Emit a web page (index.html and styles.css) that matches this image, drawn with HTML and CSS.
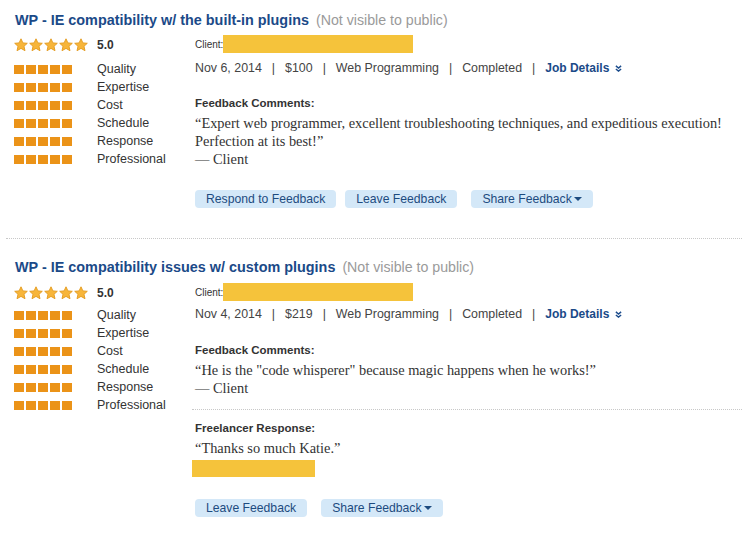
FILE: index.html
```html
<!DOCTYPE html>
<html>
<head>
<meta charset="utf-8">
<link rel="stylesheet" href="styles.css">
</head>
<body>
<svg width="0" height="0" class="defs">
  <defs>
    <symbol id="star" viewBox="0 0 14 14">
      <path d="M7 0.8 L8.9 4.9 L13.3 5.3 L10 8.3 L11 12.7 L7 10.4 L3 12.7 L4 8.3 L0.7 5.3 L5.1 4.9 Z" fill="#f7b53a" stroke="#e39a1d" stroke-width="0.9" stroke-linejoin="round"/>
    </symbol>
    <symbol id="chev" viewBox="0 0 8 8">
      <path d="M1 1 L4 3.5 L7 1 M1 4.5 L4 7 L7 4.5" fill="none" stroke="#1c4c8c" stroke-width="1.6"/>
    </symbol>
  </defs>
</svg>

<div class="review">
  <div class="title"><span class="job">WP - IE compatibility w/ the built-in plugins</span> <span class="private">(Not visible to public)</span></div>
  <div class="body">
    <div class="ratings">
      <div class="overall">
        <span class="stars"><svg><use href="#star"/></svg><svg><use href="#star"/></svg><svg><use href="#star"/></svg><svg><use href="#star"/></svg><svg><use href="#star"/></svg></span>
        <span class="score">5.0</span>
      </div>
      <div class="crit"><span class="bar"><i></i><i></i><i></i><i></i><i></i></span><span>Quality</span></div>
      <div class="crit"><span class="bar"><i></i><i></i><i></i><i></i><i></i></span><span>Expertise</span></div>
      <div class="crit"><span class="bar"><i></i><i></i><i></i><i></i><i></i></span><span>Cost</span></div>
      <div class="crit"><span class="bar"><i></i><i></i><i></i><i></i><i></i></span><span>Schedule</span></div>
      <div class="crit"><span class="bar"><i></i><i></i><i></i><i></i><i></i></span><span>Response</span></div>
      <div class="crit"><span class="bar"><i></i><i></i><i></i><i></i><i></i></span><span>Professional</span></div>
    </div>
    <div class="detail">
      <div class="client">Client:<span class="redact"></span></div>
      <div class="meta"><span>Nov 6, 2014</span><span class="pipe">|</span><span>$100</span><span class="pipe">|</span><span>Web Programming</span><span class="pipe">|</span><span>Completed</span><span class="pipe">|</span><a class="jobdetails">Job Details <svg><use href="#chev"/></svg></a></div>
      <div class="label fb">Feedback Comments:</div>
      <div class="quote">“Expert web programmer, excellent troubleshooting techniques, and expeditious execution! Perfection at its best!”</div>
      <div class="quote">— Client</div>
      <div class="buttons">
        <span class="btn">Respond to Feedback</span>
        <span class="btn">Leave Feedback</span>
        <span class="btn share">Share Feedback<b class="caret"></b></span>
      </div>
    </div>
  </div>
</div>

<div class="review second">
  <div class="title"><span class="job">WP - IE compatibility issues w/ custom plugins</span> <span class="private">(Not visible to public)</span></div>
  <div class="body">
    <div class="ratings">
      <div class="overall">
        <span class="stars"><svg><use href="#star"/></svg><svg><use href="#star"/></svg><svg><use href="#star"/></svg><svg><use href="#star"/></svg><svg><use href="#star"/></svg></span>
        <span class="score">5.0</span>
      </div>
      <div class="crit"><span class="bar"><i></i><i></i><i></i><i></i><i></i></span><span>Quality</span></div>
      <div class="crit"><span class="bar"><i></i><i></i><i></i><i></i><i></i></span><span>Expertise</span></div>
      <div class="crit"><span class="bar"><i></i><i></i><i></i><i></i><i></i></span><span>Cost</span></div>
      <div class="crit"><span class="bar"><i></i><i></i><i></i><i></i><i></i></span><span>Schedule</span></div>
      <div class="crit"><span class="bar"><i></i><i></i><i></i><i></i><i></i></span><span>Response</span></div>
      <div class="crit"><span class="bar"><i></i><i></i><i></i><i></i><i></i></span><span>Professional</span></div>
    </div>
    <div class="detail">
      <div class="client">Client:<span class="redact"></span></div>
      <div class="meta"><span>Nov 4, 2014</span><span class="pipe">|</span><span>$219</span><span class="pipe">|</span><span>Web Programming</span><span class="pipe">|</span><span>Completed</span><span class="pipe">|</span><a class="jobdetails">Job Details <svg><use href="#chev"/></svg></a></div>
      <div class="label fb">Feedback Comments:</div>
      <div class="quote">“He is the "code whisperer" because magic happens when he works!”</div>
      <div class="quote">— Client</div>
      <div class="response">
        <div class="label">Freelancer Response:</div>
        <div class="quote">“Thanks so much Katie.”</div>
        <div class="redact2"></div>
      </div>
      <div class="buttons">
        <span class="btn">Leave Feedback</span>
        <span class="btn share">Share Feedback<b class="caret"></b></span>
      </div>
    </div>
  </div>
</div>
</body>
</html>
```
FILE: styles.css
```css
html, body {
  margin: 0;
  padding: 0;
  background: #fff;
}
body {
  font-family: "Liberation Sans", Arial, sans-serif;
  color: #333;
  width: 742px;
}
.defs {
  position: absolute;
  width: 0;
  height: 0;
}
.review {
  padding: 11px 0 30px 14px;
  border-bottom: 1px dotted #c8c8c8;
  margin-left: 6px;
}
.review .title {
  margin-left: -5px;
}
.review .body {
  margin-left: -6px;
}
.review.second {
  border-bottom: none;
  padding-top: 19px;
}
.title {
  height: 18px;
  line-height: 18px;
  font-size: 14.4px;
}
.job {
  font-weight: bold;
  color: #1b4a88;
}
.private {
  color: #9a9a9a;
  font-size: 14.2px;
  margin-left: 3px;
}
.body {
  display: flex;
  margin-top: 6px;
}
.second .body {
  margin-top: 7px;
}
.ratings {
  width: 181px;
  flex: none;
  padding-top: 1px;
}
.overall {
  display: flex;
  align-items: center;
  height: 18px;
}
.stars {
  display: flex;
  gap: 1px;
  width: 83px;
}
.stars svg {
  width: 14px;
  height: 14px;
}
.score {
  font-weight: bold;
  font-size: 12px;
  color: #333;
}
.crit {
  display: flex;
  align-items: center;
  height: 18px;
  font-size: 12.5px;
  color: #333;
}
.overall + .crit {
  margin-top: 6px;
}
.second .overall + .crit {
  margin-top: 4px;
}
.bar {
  display: flex;
  gap: 2px;
  width: 83px;
}
.bar i {
  display: block;
  width: 10px;
  height: 9px;
  background: #eb9318;
}
.detail {
  flex: 1;
}
.client {
  display: flex;
  align-items: center;
  height: 18px;
  font-size: 10px;
  color: #333;
}
.redact {
  display: block;
  width: 190px;
  height: 18px;
  background: #f5c33b;
}
.meta {
  display: flex;
  align-items: center;
  height: 18px;
  margin-top: 6px;
  font-size: 12.4px;
  color: #444;
}
.second .meta {
  margin-top: 4px;
}
.pipe {
  margin: 0 10px;
}
.jobdetails {
  font-weight: bold;
  font-size: 12px;
  color: #1b4a88;
  display: flex;
  align-items: center;
}
.jobdetails svg {
  width: 7px;
  height: 7px;
  margin-left: 6px;
}
.label {
  font-size: 11.5px;
  font-weight: bold;
  color: #333;
  line-height: 18px;
}
.fb {
  margin-top: 17px;
}
.second .fb {
  margin-top: 18px;
}
.quote {
  font-family: "Liberation Serif", "Times New Roman", serif;
  font-size: 14.4px;
  line-height: 18px;
  color: #333;
  padding-right: 10px;
}
.label + .quote {
  margin-top: 2px;
}
.response {
  margin-top: 12px;
  margin-left: -3px;
  padding-top: 9px;
  padding-left: 3px;
  border-top: 1px dotted #c8c8c8;
}
.redact2 {
  margin-left: -3px;
  margin-top: 3px;
  width: 123px;
  height: 17px;
  background: #f5c33b;
}
.buttons {
  display: flex;
  gap: 9px;
  margin-top: 22px;
}
.btn {
  display: flex;
  align-items: center;
  height: 18px;
  padding: 0 11px;
  border-radius: 4px;
  background: #d4e8f8;
  color: #1d4b7f;
  font-size: 12.2px;
}
.btn.share {
  margin-left: 5px;
}
.caret {
  display: block;
  width: 0;
  height: 0;
  margin-left: 2px;
  border-left: 4px solid transparent;
  border-right: 4px solid transparent;
  border-top: 4px solid #1d4b7f;
}
```
